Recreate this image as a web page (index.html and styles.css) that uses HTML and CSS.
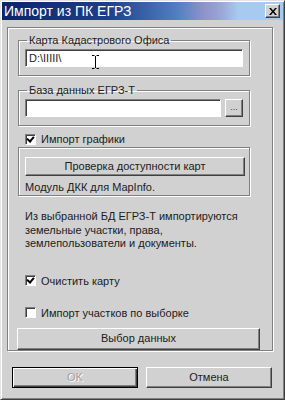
FILE: index.html
```html
<!DOCTYPE html>
<html lang="ru">
<head>
  <meta charset="UTF-8" />
  <meta name="viewport" content="width=device-width, initial-scale=1.0" />
  <title>Импорт из ПК ЕГРЗ</title>
  <link rel="stylesheet" href="styles.css">
</head>
<body>
  <div class="window">
    <div class="titlebar">
      <span class="title">Импорт из ПК ЕГРЗ</span>
      <span class="close">
        <svg width="8" height="7" viewBox="0 0 8 7"><path d="M0 0h2l2 2.5L6 0h2L5 3.5 8 7H6L4 4.5 2 7H0l3-3.5z" fill="#000"/></svg>
      </span>
    </div>
    <div class="content">
      <div class="frame">
        <fieldset class="group group-map">
          <legend>Карта Кадастрового Офиса</legend>
          <div class="edit edit-map">D:\IIIII\</div>
          <svg class="ibeam" width="7" height="14" viewBox="0 0 7 14"><path d="M0 .5h2.5M4.5 .5H7M3.5 1v12M0 13.5h2.5M4.5 13.5H7" stroke="#000" fill="none"/></svg>
        </fieldset>

        <fieldset class="group group-db">
          <legend>База данных ЕГРЗ-Т</legend>
          <div class="edit-row">
            <div class="edit edit-db"></div>
            <div class="btn btn-dots">...</div>
          </div>
        </fieldset>

        <div class="check check-graph"><span class="box on"></span>Импорт графики</div>

        <div class="group group-check">
          <div class="btn btn-maps">Проверка доступности карт</div>
          <div class="note">Модуль ДКК для MapInfo.</div>
        </div>

        <p class="info">Из выбранной БД ЕГРЗ-Т импортируются<br>земельные участки, права,<br>землепользователи и документы.</p>

        <div class="check check-clear"><span class="box on"></span>Очистить карту</div>
        <div class="check check-select"><span class="box"></span>Импорт участков по выборке</div>

        <div class="btn btn-data">Выбор данных</div>
      </div>

      <div class="actions">
        <div class="btn btn-ok">OK</div>
        <div class="btn btn-cancel">Отмена</div>
      </div>
    </div>
  </div>
</body>
</html>
```

FILE: styles.css
```css
* {
  box-sizing: border-box;
}
body {
  margin: 0;
  background: #d1d1d1;
  font-family: 'Liberation Sans', Arial, sans-serif;
  font-size: 11px;
  color: #1c1c1c;
}
.window {
  width: 285px;
  height: 400px;
  background: #d1d1d1;
  border: 1px solid;
  border-color: #e4e4e4 #404040 #404040 #e4e4e4;
  box-shadow: inset 1px 1px 0 #fff, inset -1px -1px 0 #808080;
  padding: 1px;
}
.titlebar {
  height: 18px;
  display: flex;
  align-items: center;
  justify-content: space-between;
  padding: 0 3px 0 2px;
  background: linear-gradient(to right, #0a246a 0%, #1e3f8c 38%, #4f7fc0 62%, #8f93cc 72%, #9aa6d8 78%, #a6caf0 84%, #a6caf0 100%);
}
.title {
  color: #fff;
  font-size: 14px;
}
.close {
  width: 15px;
  height: 14px;
  display: flex;
  align-items: center;
  justify-content: center;
  background: #d1d1d1;
  border: 1px solid;
  border-color: #fff #404040 #404040 #fff;
  box-shadow: inset -1px -1px 0 #808080;
}
.content {
  padding: 7px 0 0 5px;
}
.frame {
  width: 266px;
  height: 324px;
  border: 1px solid #808080;
  box-shadow: inset 1px 1px 0 #fff, 1px 1px 0 #fff;
  padding: 0 0 0 10px;
  display: flow-root;
}
.group {
  width: 232px;
  margin: 0;
  border: 1px solid #808080;
  box-shadow: inset 1px 1px 0 #fff, 1px 1px 0 #fff;
}
fieldset.group {
  position: relative;
  padding: 2px 6px 8px 6px;
  min-width: 0;
}
legend {
  padding: 0 2px;
  margin-left: 2px;
  line-height: 14px;
}
.group-map {
  margin-top: 5px;
}
.group-db {
  margin-top: 7px;
}
.edit {
  height: 18px;
  background: #fff;
  border: 1px solid;
  border-color: #808080 #fff #fff #808080;
  box-shadow: inset 1px 1px 0 #404040;
  padding: 1px 3px;
  line-height: 15px;
}
.edit-map {
  width: 218px;
}
.ibeam {
  position: absolute;
  left: 73px;
  top: 8px;
}
.edit-row {
  display: flex;
  gap: 4px;
}
.edit-db {
  width: 196px;
}
.btn {
  background: #d1d1d1;
  border: 1px solid;
  border-color: #fff #404040 #404040 #fff;
  box-shadow: inset -1px -1px 0 #808080;
  text-align: center;
}
.btn-dots {
  width: 18px;
  height: 18px;
  font-size: 9px;
  line-height: 14px;
  color: #444;
}
.check {
  display: flex;
  align-items: center;
  gap: 5px;
  margin-left: 7px;
  height: 14px;
}
.box {
  width: 11px;
  height: 11px;
  background: #fff;
  border: 1px solid;
  border-color: #808080 #fff #fff #808080;
  box-shadow: inset 1px 1px 0 #404040;
  position: relative;
}
.box.on::after {
  content: '';
  position: absolute;
  left: 2px;
  top: 0;
  width: 3px;
  height: 5px;
  border: solid #000;
  border-width: 0 2px 2px 0;
  transform: rotate(40deg);
}
.check-graph {
  margin-top: 6px;
}
.group-check {
  margin-top: 1px;
  height: 49px;
  padding: 9px 0 0 6px;
}
.btn-maps {
  width: 220px;
  height: 19px;
  line-height: 16px;
}
.note {
  margin-top: 4px;
  line-height: 14px;
}
.info {
  margin: 14px 0 0 7px;
  line-height: 13.5px;
}
.check-clear {
  margin-top: 23px;
}
.check-select {
  margin-top: 18px;
}
.btn-data {
  width: 243px;
  height: 22px;
  line-height: 19px;
  margin: 8px 0 0 -1px;
}
.actions {
  display: flex;
  gap: 8px;
  margin: 16px 0 0 5px;
}
.actions .btn {
  width: 126px;
  height: 21px;
  line-height: 18px;
}
.btn-ok {
  color: #a0a0a0;
  text-shadow: 1px 1px 0 #fff;
  border-color: #000;
  box-shadow: inset 1px 1px 0 #fff, inset -1px -1px 0 #404040, inset -2px -2px 0 #808080;
}
```
